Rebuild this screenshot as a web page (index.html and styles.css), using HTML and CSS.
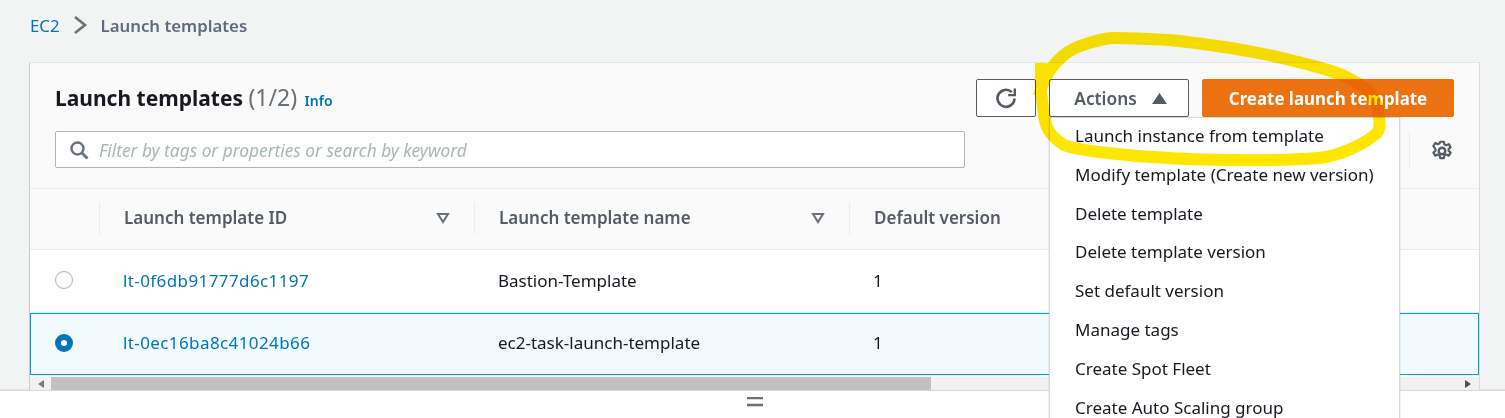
FILE: index.html
```html
<!DOCTYPE html>
<html lang="en">
<head>
<meta charset="utf-8">
<title>Launch templates</title>
<link rel="stylesheet" href="styles.css">
</head>
<body>
<main class="main">
  <nav class="crumbs">
    <a class="crumb-link">EC2</a>
    <svg class="crumb-sep" width="15" height="20" viewBox="0 0 15 20"><path d="M2 2l10 8-10 8" fill="none" stroke="#687078" stroke-width="2.6"/></svg>
    <span class="crumb-current">Launch templates</span>
  </nav>
  <section class="card">
    <header class="head">
      <div class="top-row">
        <h1 class="title">Launch templates <span class="count">(1/2)</span> <a class="info">Info</a></h1>
        <div class="actions-row">
          <button class="btn btn-icon" aria-label="Refresh">
            <svg width="24" height="24" viewBox="0 0 24 24"><path d="M20.5 12.5a8.5 8.5 0 1 1-2.7-6.4" fill="none" stroke="#545b64" stroke-width="2.6"/><path d="M20.8 2.5v6.6h-6.6" fill="none" stroke="#545b64" stroke-width="2.4"/></svg>
          </button>
          <div class="dropdown">
            <button class="btn btn-actions">Actions
              <svg width="15" height="11" viewBox="0 0 15 11"><path d="M7.5 0L15 11H0z" fill="#545b64"/></svg>
            </button>
            <ul class="menu">
              <li class="menu-item">Launch instance from template</li>
              <li class="menu-item">Modify template (Create new version)</li>
              <li class="menu-item">Delete template</li>
              <li class="menu-item">Delete template version</li>
              <li class="menu-item">Set default version</li>
              <li class="menu-item">Manage tags</li>
              <li class="menu-item">Create Spot Fleet</li>
              <li class="menu-item">Create Auto Scaling group</li>
            </ul>
          </div>
          <button class="btn btn-primary">Create launch template</button>
        </div>
      </div>
      <div class="filter-row">
        <label class="search">
          <svg width="20" height="20" viewBox="0 0 20 20"><circle cx="8.5" cy="8.5" r="6" fill="none" stroke="#687078" stroke-width="2.4"/><path d="M13 13l5.5 5.5" stroke="#687078" stroke-width="2.8"/></svg>
          <span class="placeholder">Filter by tags or properties or search by keyword</span>
        </label>
        <div class="prefs">
          <svg width="24" height="24" viewBox="0 0 22 22"><circle cx="11" cy="11" r="3" fill="none" stroke="#545b64" stroke-width="2.2"/><path d="M9.3 2.5h3.4l.5 2.5 1.7.8 2.3-1.1 1.7 2.8-1.9 1.7v1.6l1.9 1.7-1.7 2.8-2.3-1.1-1.7.8-.5 2.5H9.3l-.5-2.5-1.7-.8-2.3 1.1-1.7-2.8 1.9-1.7v-1.6L3.1 6.5l1.7-2.8 2.3 1.1 1.7-.8z" fill="none" stroke="#545b64" stroke-width="2" stroke-linejoin="round"/></svg>
        </div>
      </div>
    </header>
    <div class="table">
      <div class="row row-head">
        <div class="cell cell-radio"></div>
        <div class="cell th"><span>Launch template ID</span><svg class="sort" width="14" height="12" viewBox="0 0 14 12"><path d="M2 2h10l-5 8z" fill="none" stroke="#687078" stroke-width="2"/></svg></div>
        <div class="cell th"><span>Launch template name</span><svg class="sort" width="14" height="12" viewBox="0 0 14 12"><path d="M2 2h10l-5 8z" fill="none" stroke="#687078" stroke-width="2"/></svg></div>
        <div class="cell th th-last"><span>Default version</span></div>
      </div>
      <div class="row row-body">
        <div class="cell cell-radio"><span class="radio"></span></div>
        <div class="cell td"><a class="link">lt-0f6db91777d6c1197</a></div>
        <div class="cell td">Bastion-Template</div>
        <div class="cell td">1</div>
      </div>
      <div class="row row-body row-selected">
        <div class="cell cell-radio"><span class="radio radio-on"></span></div>
        <div class="cell td"><a class="link">lt-0ec16ba8c41024b66</a></div>
        <div class="cell td">ec2-task-launch-template</div>
        <div class="cell td">1</div>
      </div>
    </div>
    <div class="scrollbar">
      <svg class="arrow" width="6" height="8" viewBox="0 0 6 8"><path d="M6 0v8L0 4z" fill="#7a7a7a"/></svg>
      <div class="track"><div class="thumb"></div></div>
      <svg class="arrow" width="6" height="8" viewBox="0 0 6 8"><path d="M0 0v8l6-4z" fill="#505050"/></svg>
    </div>
  </section>
</main>
<footer class="split">
  <svg width="16" height="10" viewBox="0 0 16 10"><path d="M0 1h16M0 8h16" stroke="#687078" stroke-width="2.6"/></svg>
</footer>
<svg class="scribble" width="1505" height="418" viewBox="0 0 1505 418" aria-hidden="true">
  <path d="M1039 96C1042 84 1046 76 1050 70C1056 62 1062 56 1068 52C1076 47 1082 45 1089 43C1098 40 1106 38 1116 38C1134 38 1150 39 1169 40C1190 42 1210 45 1231 48C1252 52 1272 55 1290 60C1310 65 1328 69 1342 75C1355 81 1364 87 1370 93C1376 101 1379 109 1379 117C1380 123 1380 129 1377 133C1370 139 1362 144 1353 148C1342 153 1330 157 1318 158C1296 160 1276 160 1255 160C1226 160 1198 160 1169 158C1145 157 1122 155 1099 152C1086 150 1074 149 1064 145C1056 140 1050 134 1047 127C1044 120 1044 114 1043 107C1042 100 1041 94 1041 87L1041 63" fill="none" stroke="#ffe600" stroke-width="12" stroke-linecap="butt" stroke-linejoin="round"/>
</svg>
</body>
</html>
```

FILE: styles.css
```css
* { box-sizing: border-box; }
html, body { margin: 0; padding: 0; }
body {
  width: 1505px;
  height: 418px;
  overflow: hidden;
  position: relative;
  background: #f2f3f3;
  color: #16191f;
  font-family: "Noto Sans", "Open Sans", sans-serif;
  font-size: 17px;
}
.main {
  height: 390px;
  padding: 0 25px 0 29px;
  display: flex;
  flex-direction: column;
}
.crumbs {
  height: 62px;
  padding: 0 0 12px 1px;
  display: flex;
  align-items: center;
  gap: 13px;
  font-size: 16.8px;
}
.crumb-link { color: #0073bb; }
.crumb-current { color: #5f6b7a; font-weight: 600; }
.card {
  flex: 1;
  min-height: 0;
  background: #fafafa;
  border-top: 1px solid #e4e7e7;
  border-left: 1px solid #c4cbcb;
  border-right: 1px solid #d5dbdb;
  display: flex;
  flex-direction: column;
}
.head {
  height: 126px;
  padding: 16px 25px 0 25px;
  border-bottom: 1px solid #eaeded;
  display: flex;
  flex-direction: column;
  gap: 14px;
}
.top-row { display: flex; justify-content: space-between; align-items: center; height: 38px; }
.title { margin: 0; padding-top: 2px; font-size: 21px; font-weight: 700; line-height: 38px; }
.count { color: #687078; font-weight: 400; font-size: 23px; }
.info { color: #0073bb; font-size: 14px; font-weight: 600; margin-left: 2px; }
.actions-row { display: flex; gap: 13px; }
.btn {
  height: 38px;
  border: 1px solid #545b64;
  border-radius: 2px;
  background: #fff;
  font: 600 17.3px "Noto Sans", "Open Sans", sans-serif;
  color: #545b64;
  display: flex;
  align-items: center;
  justify-content: center;
  padding: 0;
}
.btn-icon { width: 60px; }
.btn-actions { width: 140px; gap: 15px; padding-left: 3px; }
.btn-primary { width: 252px; background: #ec7211; border-color: #ec7211; color: #fff; font-weight: 700; font-size: 16.9px; }
.dropdown { position: relative; }
.menu {
  position: absolute;
  top: 100%;
  left: 0;
  z-index: 2;
  width: 351px;
  margin: 0;
  padding: 0;
  list-style: none;
  background: #fff;
  border: 1px solid #d5dbdb;
  box-shadow: 0 1px 2px rgba(0, 22, 43, .15);
}
.menu-item {
  height: 38.8px;
  line-height: 36.8px;
  padding-left: 25px;
  white-space: nowrap;
  color: #16191f;
}
.filter-row { display: flex; height: 37px; }
.search {
  width: 910px;
  height: 37px;
  background: #fff;
  border: 1px solid #aab7b8;
  border-radius: 2px;
  display: flex;
  align-items: center;
  gap: 10px;
  padding-left: 13px;
}
.placeholder { color: #aab7b8; font-style: italic; font-size: 17.3px; padding-top: 1px; }
.prefs {
  margin-left: auto;
  width: 45px;
  border-left: 1px solid #eaeded;
  display: flex;
  align-items: center;
  justify-content: center;
  padding: 2px 0 0 20px;
}
.table { display: flex; flex-direction: column; }
.row {
  display: grid;
  grid-template-columns: 69px 375px 375px 1fr;
  align-items: center;
}
.row-head { height: 61px; background: #fafafa; border-bottom: 1px solid #eaeded; font-weight: 600; color: #545b64; padding-bottom: 3px; }
.row-body { height: 63px; background: #fff; border-bottom: 1px solid #eaeded; padding-bottom: 2px; }
.row-selected {
  background: #f1faff;
  border: 1px solid #00a1c9;
  height: 62px;
  padding-bottom: 3px;
  grid-template-columns: 68px 375px 375px 1fr;
}
.cell { display: flex; align-items: center; }
.cell-radio { padding-left: 25px; }
.row-selected .cell-radio { padding-left: 24px; }
.th { height: 32px; border-left: 1px solid #eaeded; padding: 0 24px 0 24px; justify-content: space-between; }
.th-last { padding-right: 0; justify-content: flex-start; }
.td { padding-left: 24px; }
.link { color: #0073bb; letter-spacing: .4px; }
.radio {
  width: 18px;
  height: 18px;
  border-radius: 50%;
  background: #fff;
  border: 1px solid #aab7b8;
}
.radio-on { border: 6px solid #0073bb; }
.scrollbar {
  flex: 1;
  margin-top: 2px;
  background: #f1f1f1;
  display: flex;
  align-items: center;
  gap: 0;
  padding: 0 8px 0 8px;
}
.track { flex: 1; height: 100%; margin: 0 5px 0 7px; }
.thumb { width: 880px; height: 100%; background: #c1c1c1; }
.split {
  height: 28px;
  background: #fff;
  border-top: 1px solid #d5dbdb;
  box-shadow: 0 -1px 1px rgba(0, 0, 0, .05);
  display: flex;
  justify-content: center;
  padding: 6px 0 0 4px;
}
.scribble {
  position: absolute;
  top: 0;
  left: 0;
  z-index: 3;
  mix-blend-mode: multiply;
  pointer-events: none;
}
```
